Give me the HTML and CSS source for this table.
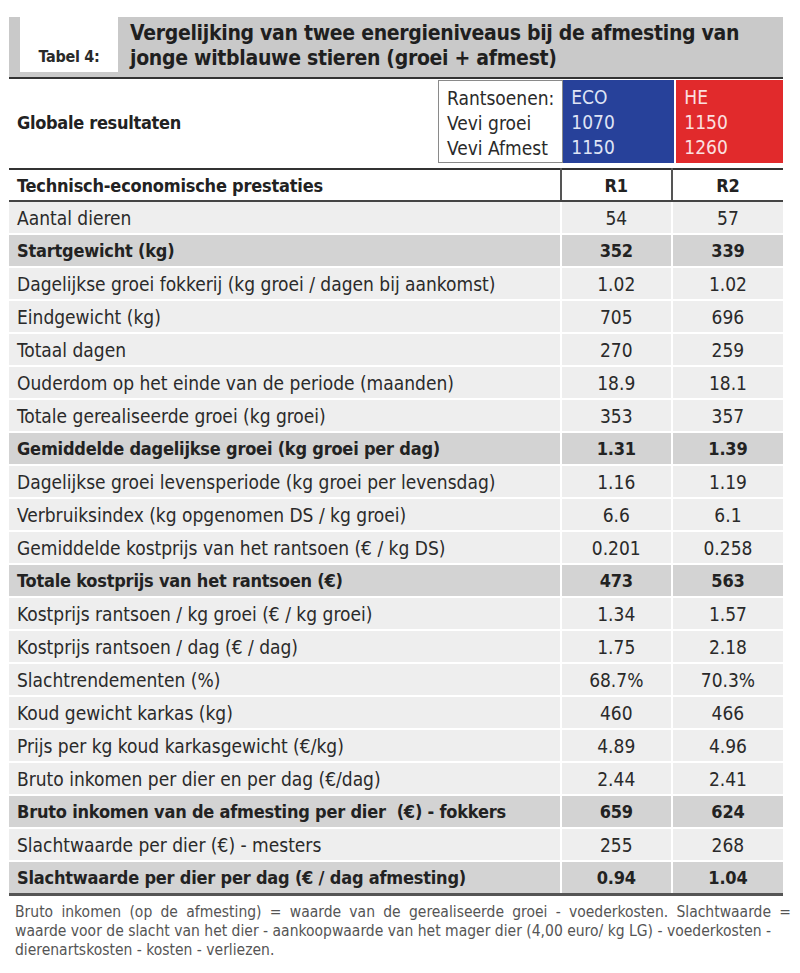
FILE: index.html
```html
<!DOCTYPE html>
<html lang="nl">
<head>
<meta charset="utf-8">
<title>Tabel 4</title>
<link rel="stylesheet" href="styles.css">
</head>
<body>
<div class="page">
  <header class="title-bar">
    <div class="tag">Tabel 4:</div>
    <h1 class="title">Vergelijking van twee energieniveaus bij de afmesting van<br>jonge witblauwe stieren (groei + afmest)</h1>
  </header>

  <section class="global">
    <h2 class="global-title">Globale resultaten</h2>
    <div class="rations">
      <div class="rations-col rations-labels">
        <span>Rantsoenen:</span>
        <span>Vevi groei</span>
        <span>Vevi Afmest</span>
      </div>
      <div class="rations-col rations-eco">
        <span>ECO</span>
        <span>1070</span>
        <span>1150</span>
      </div>
      <div class="rations-col rations-he">
        <span>HE</span>
        <span>1150</span>
        <span>1260</span>
      </div>
    </div>
  </section>

  <table class="results">
    <thead>
      <tr>
        <th class="label">Technisch-economische prestaties</th>
        <th class="val">R1</th>
        <th class="val">R2</th>
      </tr>
    </thead>
    <tbody>
      <tr><td class="label">Aantal dieren</td><td class="val">54</td><td class="val">57</td></tr>
      <tr class="strong"><td class="label">Startgewicht (kg)</td><td class="val">352</td><td class="val">339</td></tr>
      <tr><td class="label">Dagelijkse groei fokkerij (kg groei / dagen bij aankomst)</td><td class="val">1.02</td><td class="val">1.02</td></tr>
      <tr><td class="label">Eindgewicht (kg)</td><td class="val">705</td><td class="val">696</td></tr>
      <tr><td class="label">Totaal dagen</td><td class="val">270</td><td class="val">259</td></tr>
      <tr><td class="label">Ouderdom op het einde van de periode (maanden)</td><td class="val">18.9</td><td class="val">18.1</td></tr>
      <tr><td class="label">Totale gerealiseerde groei (kg groei)</td><td class="val">353</td><td class="val">357</td></tr>
      <tr class="strong"><td class="label">Gemiddelde dagelijkse groei (kg groei per dag)</td><td class="val">1.31</td><td class="val">1.39</td></tr>
      <tr><td class="label">Dagelijkse groei levensperiode (kg groei per levensdag)</td><td class="val">1.16</td><td class="val">1.19</td></tr>
      <tr><td class="label">Verbruiksindex (kg opgenomen DS / kg groei)</td><td class="val">6.6</td><td class="val">6.1</td></tr>
      <tr><td class="label">Gemiddelde kostprijs van het rantsoen (€ / kg DS)</td><td class="val">0.201</td><td class="val">0.258</td></tr>
      <tr class="strong"><td class="label">Totale kostprijs van het rantsoen (€)</td><td class="val">473</td><td class="val">563</td></tr>
      <tr><td class="label">Kostprijs rantsoen / kg groei (€ / kg groei)</td><td class="val">1.34</td><td class="val">1.57</td></tr>
      <tr><td class="label">Kostprijs rantsoen / dag (€ / dag)</td><td class="val">1.75</td><td class="val">2.18</td></tr>
      <tr><td class="label">Slachtrendementen (%)</td><td class="val">68.7%</td><td class="val">70.3%</td></tr>
      <tr><td class="label">Koud gewicht karkas (kg)</td><td class="val">460</td><td class="val">466</td></tr>
      <tr><td class="label">Prijs per kg koud karkasgewicht (€/kg)</td><td class="val">4.89</td><td class="val">4.96</td></tr>
      <tr><td class="label">Bruto inkomen per dier en per dag (€/dag)</td><td class="val">2.44</td><td class="val">2.41</td></tr>
      <tr class="strong"><td class="label">Bruto inkomen van de afmesting per dier&nbsp; (€) - fokkers</td><td class="val">659</td><td class="val">624</td></tr>
      <tr><td class="label">Slachtwaarde per dier (€) - mesters</td><td class="val">255</td><td class="val">268</td></tr>
      <tr class="strong last"><td class="label">Slachtwaarde per dier per dag (€ / dag afmesting)</td><td class="val">0.94</td><td class="val">1.04</td></tr>
    </tbody>
  </table>

  <p class="note">
    <span class="note-line note-justified">Bruto inkomen (op de afmesting) = waarde van de gerealiseerde groei - voederkosten. Slachtwaarde =</span>
    <span class="note-line">waarde voor de slacht van het dier - aankoopwaarde van het mager dier (4,00 euro/ kg LG) - voederkosten -</span>
    <span class="note-line">dierenartskosten - kosten - verliezen.</span>
  </p>
</div>
</body>
</html>
```

FILE: styles.css
```css
* { box-sizing: border-box; }

html, body {
  margin: 0;
  padding: 0;
  background: #ffffff;
}

body {
  font-family: "DejaVu Sans Condensed", "Liberation Sans", Arial, sans-serif;
  color: #222222;
}

.page {
  width: 774px;
  margin-left: 9px;
}

/* ---------- title bar ---------- */
.title-bar {
  display: flex;
  align-items: flex-start;
  margin-top: 17px;
  height: 62px;
  background: #c9c9c9;
  border-bottom: 2px solid #333333;
}

.tag {
  flex: 0 0 98px;
  height: 72px;
  margin-top: -17px;
  margin-left: 11px;
  background: #ffffff;
  display: flex;
  align-items: flex-end;
  justify-content: center;
  padding-bottom: 6px;
  font-weight: bold;
  font-size: 16px;
  letter-spacing: -0.3px;
  color: #2a2a2a;
}

.title {
  margin: 4px 0 0 12px;
  font-size: 21px;
  line-height: 25px;
  letter-spacing: -0.3px;
  font-weight: bold;
  color: #1f1f1f;
  white-space: nowrap;
}

/* ---------- global results ---------- */
.global {
  display: flex;
  align-items: center;
  justify-content: space-between;
  height: 89px;
  padding-top: 1px;
  padding-bottom: 4px;
}

.global-title {
  margin: 0 0 0 8px;
  font-size: 18px;
  letter-spacing: -0.3px;
  font-weight: bold;
  color: #222222;
}

.rations {
  display: flex;
  width: 345px;
  height: 83px;
  align-self: flex-start;
}

.rations-col {
  display: flex;
  flex-direction: column;
  padding: 5px 8px 0 8px;
  font-size: 19px;
  line-height: 25px;
}

.rations-labels {
  flex: 0 0 120px;
  border: 1px solid #8a8a8a;
  padding-left: 8px;
  color: #2a2a2a;
}

.rations-eco {
  flex: 0 0 111px;
  background: #27419a;
  color: #dfe4f5;
  margin-right: 2px;
}

.rations-he {
  flex: 1 1 auto;
  background: #e12a2c;
  color: #fbe0e0;
}

/* ---------- results table ---------- */
.results {
  width: 774px;
  border-collapse: collapse;
  border-top: 2px solid #333333;
  font-size: 19px;
}

.results th,
.results td {
  padding: 0;
  height: 33px;
  vertical-align: middle;
}

.results th {
  height: 32px;
  font-size: 18px;
  letter-spacing: -0.2px;
  font-weight: bold;
  background: #ffffff;
  border-bottom: 2px solid #444444;
}

.results th.val {
  border-left: 2px solid #555555;
}

.results .label {
  width: 551px;
  text-align: left;
  padding-left: 8px;
}

.results .val {
  width: 111px;
  text-align: center;
}

.results td {
  background: #eeeeee;
  border-bottom: 2px solid #ffffff;
  color: #2a2a2a;
}

.results td.val {
  border-left: 2px solid #ffffff;
}

.results tr.strong td {
  background: #d3d3d3;
  font-weight: bold;
  font-size: 18px;
  letter-spacing: -0.2px;
  color: #222222;
}

.results tr.last td {
  border-bottom: 3px solid #555555;
}

/* ---------- note ---------- */
.note {
  margin: 7px -8px 0 6px;
  font-size: 15.5px;
  line-height: 19px;
  color: #555555;
}

.note-line {
  display: block;
  white-space: nowrap;
}

.note-justified {
  white-space: normal;
  text-align: justify;
  text-align-last: justify;
}
```
